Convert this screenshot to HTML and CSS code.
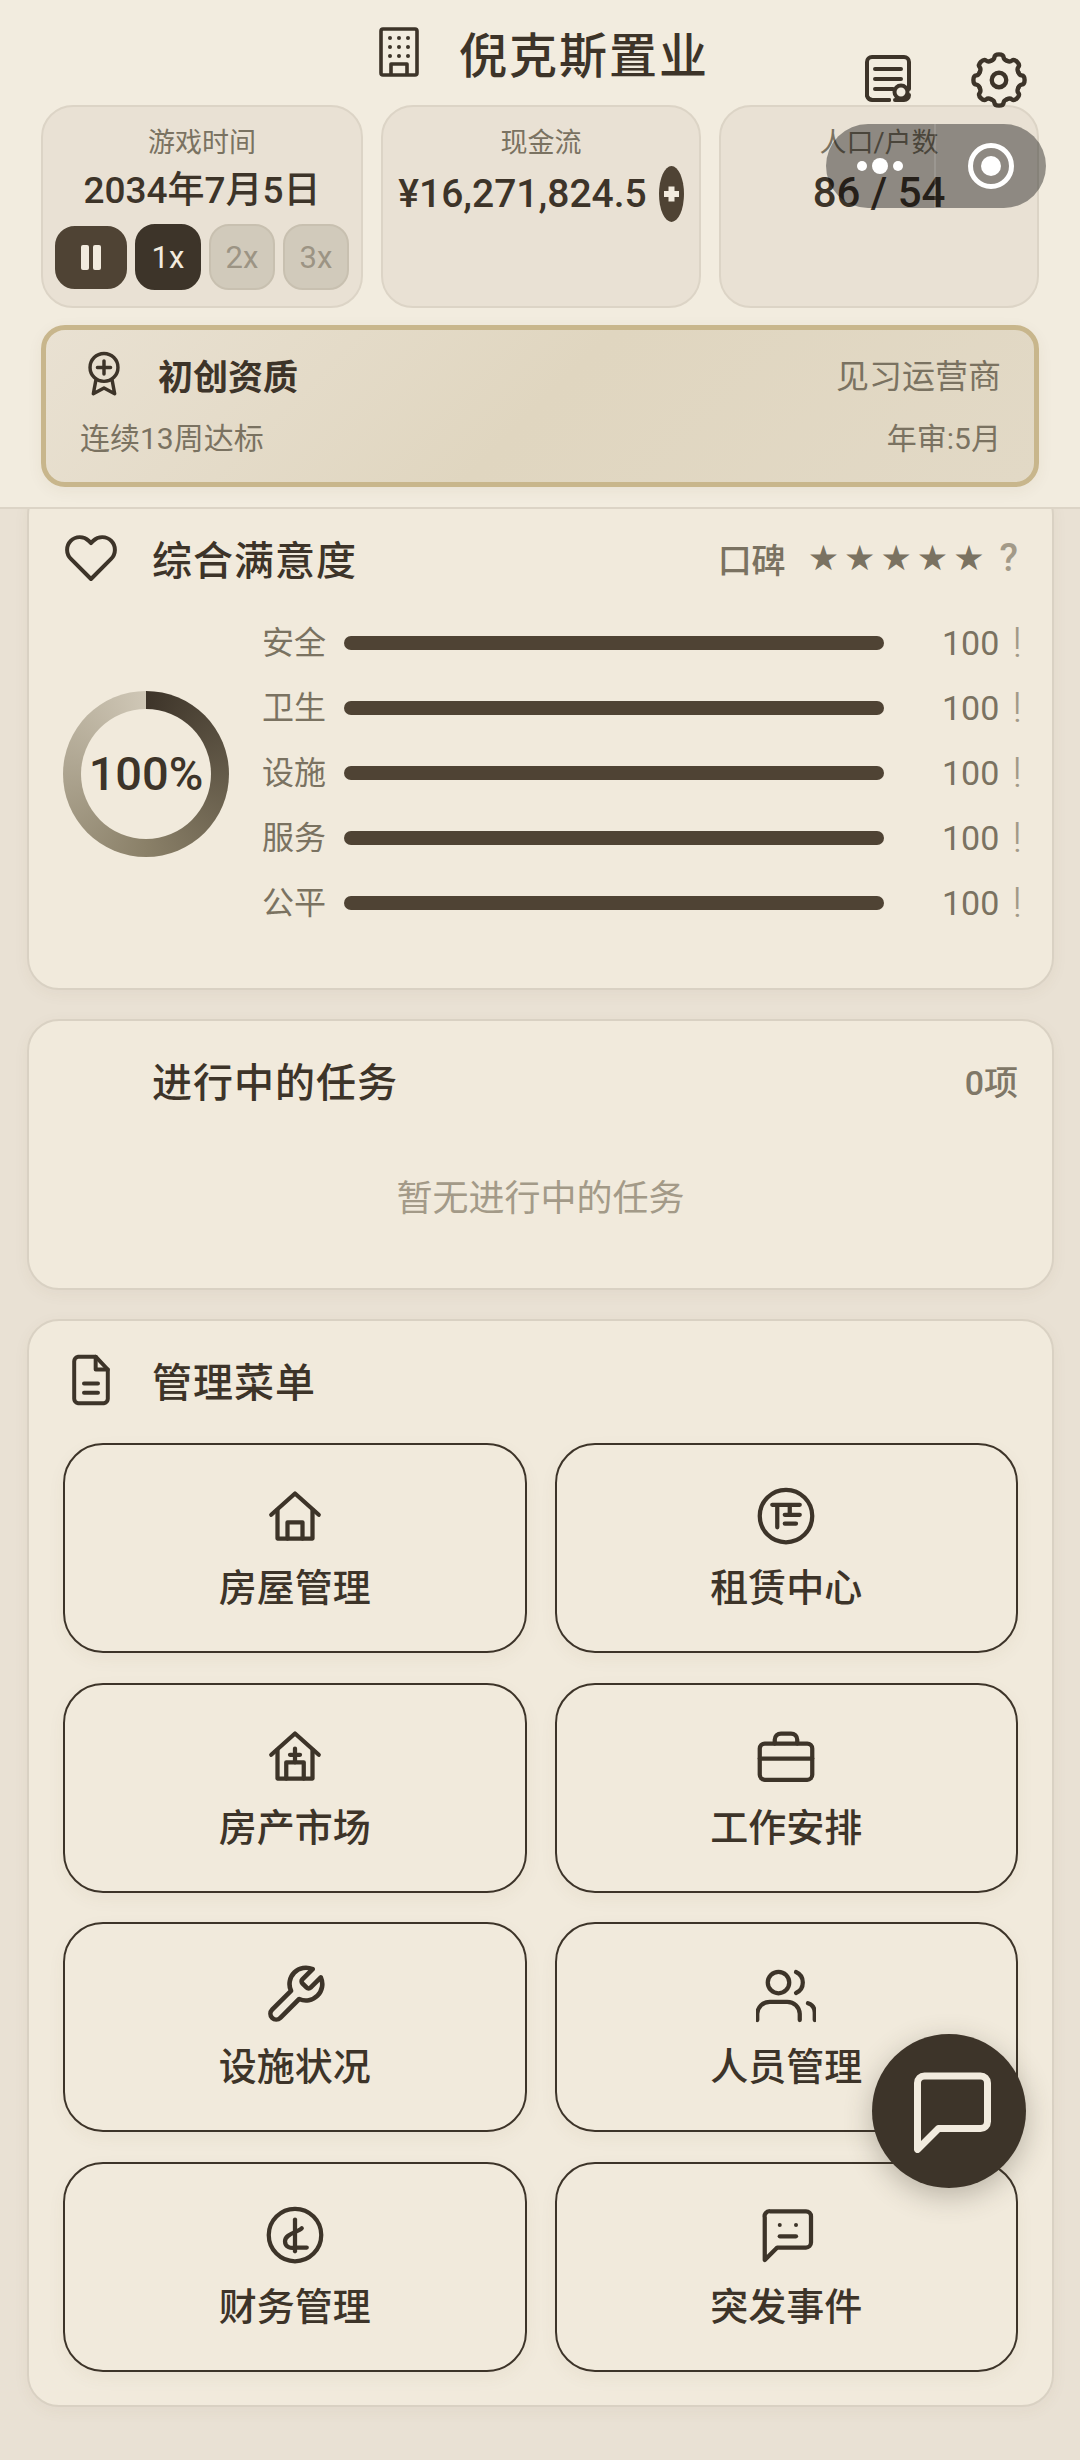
FILE: index.html
```html
<!DOCTYPE html>
<html lang="zh-CN">
<head>
    <meta charset="UTF-8">
    <title>倪克斯置业</title>
    <link rel="stylesheet" href="styles.css">
</head>
<body>
    <header class="top">
        <div class="brand">
            <svg class="brand-icon" viewBox="0 0 40 50"><rect x="2" y="2" width="36" height="46" rx="2"/><path d="M12 47V37H28V47"/><g class="dots"><circle cx="11" cy="11" r="2"/><circle cx="20" cy="11" r="2"/><circle cx="29" cy="11" r="2"/><circle cx="11" cy="20" r="2"/><circle cx="20" cy="20" r="2"/><circle cx="29" cy="20" r="2"/><circle cx="11" cy="29" r="2"/><circle cx="20" cy="29" r="2"/><circle cx="29" cy="29" r="2"/></g></svg>
            <h1>倪克斯置业</h1>
        </div>
        <svg class="top-icon log-icon" viewBox="0 0 46 48"><path d="M24 45H8a6 6 0 0 1-6-4V7a5 5 0 0 1 5-5H39a5 5 0 0 1 5 5V34"/><path d="M24 45H8"/><path d="M10 14H36M10 24H36M10 34H28"/><circle cx="36" cy="37" r="6.5"/><path d="M30 45H39a5 5 0 0 0 5-5"/></svg>
        <svg class="top-icon gear-icon" viewBox="0 0 24 24"><g id="gear"><path d="M8.7 4.05Q10 3.6 10.1 2.6Q10.2 1.4 12 1.4Q13.8 1.4 13.9 2.6Q14 3.6 15.3 4.05"/><path transform="rotate(45 12 12)" d="M8.7 4.05Q10 3.6 10.1 2.6Q10.2 1.4 12 1.4Q13.8 1.4 13.9 2.6Q14 3.6 15.3 4.05"/><path transform="rotate(90 12 12)" d="M8.7 4.05Q10 3.6 10.1 2.6Q10.2 1.4 12 1.4Q13.8 1.4 13.9 2.6Q14 3.6 15.3 4.05"/><path transform="rotate(135 12 12)" d="M8.7 4.05Q10 3.6 10.1 2.6Q10.2 1.4 12 1.4Q13.8 1.4 13.9 2.6Q14 3.6 15.3 4.05"/><path transform="rotate(180 12 12)" d="M8.7 4.05Q10 3.6 10.1 2.6Q10.2 1.4 12 1.4Q13.8 1.4 13.9 2.6Q14 3.6 15.3 4.05"/><path transform="rotate(225 12 12)" d="M8.7 4.05Q10 3.6 10.1 2.6Q10.2 1.4 12 1.4Q13.8 1.4 13.9 2.6Q14 3.6 15.3 4.05"/><path transform="rotate(270 12 12)" d="M8.7 4.05Q10 3.6 10.1 2.6Q10.2 1.4 12 1.4Q13.8 1.4 13.9 2.6Q14 3.6 15.3 4.05"/><path transform="rotate(315 12 12)" d="M8.7 4.05Q10 3.6 10.1 2.6Q10.2 1.4 12 1.4Q13.8 1.4 13.9 2.6Q14 3.6 15.3 4.05"/></g><circle cx="12" cy="12" r="3"/></svg>

        <div class="stats">
            <div class="stat">
                <div class="stat-label">游戏时间</div>
                <div class="stat-value">2034年7月5日</div>
                <div class="speeds">
                    <div class="speed pause"><i></i><i></i></div>
                    <div class="speed active">1x</div>
                    <div class="speed">2x</div>
                    <div class="speed">3x</div>
                </div>
            </div>
            <div class="stat">
                <div class="stat-label">现金流</div>
                <div class="stat-value cash">¥16,271,824.5<span class="plus"></span></div>
            </div>
            <div class="stat">
                <div class="stat-label">人口/户数</div>
                <div class="stat-value people">86 / 54</div>
            </div>
        </div>

        <div class="rank">
            <div class="rank-row">
                <div class="rank-name">
                    <svg class="rank-icon" viewBox="0 0 24 28"><circle cx="12" cy="10" r="8.5"/><path d="M12 6V14M8 10H16"/><path d="M7 18L5.5 26L12 22.5L18.5 26L17 18"/></svg>
                    <strong>初创资质</strong>
                </div>
                <span class="rank-level">见习运营商</span>
            </div>
            <div class="rank-row sub">
                <span>连续13周达标</span>
                <span>年审:5月</span>
            </div>
        </div>
    </header>

    <main class="content">
        <section class="card satisfaction">
            <div class="card-head">
                <svg class="head-icon" viewBox="0 0 24 24"><path d="M12 21L3.4 12.4A5.4 5.4 0 0 1 11 4.6L12 5.6L13 4.6A5.4 5.4 0 0 1 20.6 12.4Z"/></svg>
                <h2>综合满意度</h2>
                <div class="rep">
                    <span class="rep-label">口碑</span>
                    <span class="stars">★★★★★</span>
                    <span class="hint">?</span>
                </div>
            </div>
            <div class="sat-body">
                <div class="ring"><span>100%</span></div>
                <div class="bars">
                    <div class="bar-row"><span class="bar-label">安全</span><div class="bar"></div><span class="bar-num">100</span><span class="bar-mark">!</span></div>
                    <div class="bar-row"><span class="bar-label">卫生</span><div class="bar"></div><span class="bar-num">100</span><span class="bar-mark">!</span></div>
                    <div class="bar-row"><span class="bar-label">设施</span><div class="bar"></div><span class="bar-num">100</span><span class="bar-mark">!</span></div>
                    <div class="bar-row"><span class="bar-label">服务</span><div class="bar"></div><span class="bar-num">100</span><span class="bar-mark">!</span></div>
                    <div class="bar-row"><span class="bar-label">公平</span><div class="bar"></div><span class="bar-num">100</span><span class="bar-mark">!</span></div>
                </div>
            </div>
        </section>

        <section class="card tasks">
            <div class="card-head">
                <span class="head-icon"></span>
                <h2>进行中的任务</h2>
                <span class="task-count">0项</span>
            </div>
            <p class="empty">暂无进行中的任务</p>
        </section>

        <section class="card menu">
            <div class="card-head">
                <svg class="head-icon" viewBox="0 0 24 24"><path d="M14 2H6.5A2 2 0 0 0 4.8 4V20A2 2 0 0 0 6.5 22H17.5A2 2 0 0 0 19.2 20V7.5Z"/><path d="M14 2V7.5H19.2"/><path d="M9 13.5H15M9 17.5H15"/></svg>
                <h2>管理菜单</h2>
            </div>
            <div class="menu-grid">
                <div class="menu-item">
                    <svg class="menu-icon" viewBox="0 0 24 24"><path d="M2.5 11.5L12 3L21.5 11.5"/><path d="M5 9.5V21H19V9.5"/><path d="M9 21V14.5H15V21"/></svg>
                    <span>房屋管理</span>
                </div>
                <div class="menu-item">
                    <svg class="menu-icon" viewBox="0 0 24 24"><circle cx="12" cy="12" r="10.5"/><path d="M6.5 7.5H17.5M8.5 7.5V16.5M13.5 7.5V11.5M11.5 11.5H17.5M11.5 15H16"/></svg>
                    <span>租赁中心</span>
                </div>
                <div class="menu-item">
                    <svg class="menu-icon" viewBox="0 0 24 24"><path d="M2.5 11.5L12 3L21.5 11.5"/><path d="M5 9.5V21H19V9.5"/><path d="M8.5 21V14.5H15.5V21"/><path d="M12 9V14.5M10 11.5H14"/></svg>
                    <span>房产市场</span>
                </div>
                <div class="menu-item">
                    <svg class="menu-icon" viewBox="0 0 24 24"><rect x="1.5" y="7" width="21" height="14.5" rx="2"/><path d="M1.5 13H22.5"/><path d="M7.5 7V5.5A2.5 2.5 0 0 1 10 3H14A2.5 2.5 0 0 1 16.5 5.5V7"/></svg>
                    <span>工作安排</span>
                </div>
                <div class="menu-item">
                    <svg class="menu-icon" viewBox="1 1 22 22"><path d="M14.7 6.3a1 1 0 0 0 0 1.4l1.6 1.6a1 1 0 0 0 1.4 0l3.77-3.77a6 6 0 0 1-7.94 7.94l-6.91 6.91a2.12 2.12 0 0 1-3-3l6.91-6.91a6 6 0 0 1 7.94-7.94l-3.76 3.76z"/></svg>
                    <span>设施状况</span>
                </div>
                <div class="menu-item">
                    <svg class="menu-icon" viewBox="0.5 0 24 24"><circle cx="9.5" cy="7" r="4.3"/><path d="M16.5 2.8A4.6 4.6 0 0 1 16.5 11.2"/><path d="M1 22V19.5A5 5 0 0 1 6 14.7H13A5 5 0 0 1 18 19.5V22"/><path d="M21.3 15.3A4 4 0 0 1 24 19V22"/></svg>
                    <span>人员管理</span>
                </div>
                <div class="menu-item">
                    <svg class="menu-icon" viewBox="0 0 24 24"><circle cx="12" cy="12" r="10.5"/><path d="M12 5.8V18.5"/><path d="M14.7 9.3C13 11 8 11.5 8 14.5C8 17 10.5 17.5 12 17L16.7 17"/></svg>
                    <span>财务管理</span>
                </div>
                <div class="menu-item">
                    <svg class="menu-icon" viewBox="0 0 24 24"><path d="M3.5 22V5A2 2 0 0 1 5.5 2.5H20A2 2 0 0 1 22 4.5V15A2 2 0 0 1 20 17H8.5Z"/><path d="M9.5 12.5H16"/><circle class="eye" cx="9.5" cy="8" r="0.8"/><circle class="eye" cx="16" cy="8" r="0.8"/></svg>
                    <span>突发事件</span>
                </div>
            </div>
        </section>
    </main>

    <div class="capsule">
        <div class="capsule-more"><i></i><i class="big"></i><i></i></div>
        <div class="capsule-close"><i></i></div>
    </div>

    <div class="fab">
        <svg viewBox="0 0 24 24"><path d="M3 23V4A2 2 0 0 1 5 2H21A2 2 0 0 1 23 4V15A2 2 0 0 1 21 17H9Z"/></svg>
    </div>
</body>
</html>
```

FILE: styles.css
```css
* {
    box-sizing: border-box;
}
body {
    margin: 0;
    min-height: 2460px;
    background: #e9e1d4;
    color: #3d3429;
    font-family: Roboto, "Noto Sans CJK SC", sans-serif;
    overflow: hidden;
}
svg {
    fill: none;
    stroke: #3d3429;
    stroke-linecap: round;
    stroke-linejoin: round;
    flex-shrink: 0;
}

/* top area */
.top {
    position: relative;
    z-index: 2;
    height: 509px;
    padding: 21px 41px 0;
    background: #f2ecdf;
    border-bottom: 2px solid #dcd4c6;
}
.brand {
    display: flex;
    justify-content: center;
    align-items: center;
    gap: 40px;
    height: 62px;
    padding-left: 8px;
}
.brand-icon {
    width: 40px;
    height: 50px;
    stroke-width: 3.6;
}
.brand-icon .dots {
    fill: #3d3429;
    stroke: none;
}
h1 {
    margin: 0;
    font-size: 48px;
    font-weight: 500;
    letter-spacing: 2px;
}
.top-icon {
    position: absolute;
}
.log-icon {
    left: 865px;
    top: 55px;
    width: 46px;
    height: 48px;
    stroke-width: 4;
}
.gear-icon {
    left: 970px;
    top: 51px;
    width: 58px;
    height: 58px;
    stroke-width: 1.8;
}
.stats {
    display: grid;
    grid-template-columns: repeat(3, 1fr);
    gap: 18px;
    margin-top: 22px;
}
.stat {
    height: 203px;
    padding: 18px 12px 0;
    background: #e9e1d4;
    border: 2px solid #dcd4c6;
    border-radius: 32px;
    text-align: center;
}
.stat-label {
    font-size: 27px;
    line-height: 36px;
    color: #7a7261;
}
.stat-value {
    margin-top: 7px;
    font-size: 37px;
    line-height: 46px;
    font-weight: 500;
}
.cash {
    display: flex;
    align-items: center;
    justify-content: center;
    gap: 12px;
    margin-top: 5px;
    font-size: 39px;
    white-space: nowrap;
}
.people {
    margin-top: 9px;
    font-size: 42px;
}
.plus {
    position: relative;
    width: 25px;
    height: 56px;
    background: #4f4334;
    border-radius: 50%;
}
.plus::before,
.plus::after {
    content: "";
    position: absolute;
    left: 5px;
    top: 25px;
    width: 15px;
    height: 6px;
    background: #f2ebde;
}
.plus::after {
    transform: rotate(90deg);
}
.speeds {
    display: flex;
    justify-content: center;
    align-items: center;
    gap: 8px;
    margin-top: 10px;
}
.speed {
    width: 66px;
    height: 66px;
    display: flex;
    align-items: center;
    justify-content: center;
    background: #d1cabb;
    border: 2px solid #c8c0b0;
    border-radius: 20px;
    color: #9c9484;
    font-size: 31px;
}
.speed.active {
    background: #3d3429;
    border-color: #3d3429;
    color: #f2ebde;
}
.speed.pause {
    width: 72px;
    height: 63px;
    gap: 4px;
    background: #4f4334;
    border-color: #4f4334;
}
.pause i {
    width: 8px;
    height: 25px;
    background: #f2ebde;
    border-radius: 2px;
}

/* rank */
.rank {
    height: 162px;
    margin-top: 17px;
    padding: 17px 33px 0 34px;
    background: linear-gradient(135deg, #e9e1d2, #e0d6c0 50%, #e2d9c6);
    border: 5px solid #c8b68c;
    border-radius: 24px;
    box-shadow: 0 4px 16px rgba(90, 70, 40, 0.06);
}
.rank-row {
    display: flex;
    justify-content: space-between;
    align-items: center;
    height: 54px;
    font-size: 33px;
    color: #7a7261;
}
.rank-row.sub {
    height: 44px;
    margin-top: 13px;
    font-size: 30px;
}
.rank-name {
    display: flex;
    align-items: center;
    gap: 34px;
    margin-left: 4px;
    color: #3d3429;
    font-size: 35px;
}
.rank-icon {
    width: 40px;
    height: 46px;
    stroke-width: 2.1;
}

/* cards */
.content {
    position: relative;
    display: flex;
    flex-direction: column;
    gap: 29px;
    padding: 0 26px 0 27px;
}
.card {
    padding: 28px 34px 34px;
    background: #f1eadc;
    border: 2px solid #d9d1c3;
    border-radius: 32px;
    box-shadow: 0 4px 16px rgba(90, 70, 40, 0.05);
}
.card-head {
    display: flex;
    align-items: center;
    height: 62px;
}
.head-icon {
    width: 56px;
    height: 56px;
    margin-right: 33px;
    stroke-width: 1.7;
}
h2 {
    margin: 0;
    font-size: 40px;
    font-weight: 500;
    letter-spacing: 1px;
}

.satisfaction {
    height: 507px;
    margin-top: -26px;
    padding-top: 42px;
}
.rep {
    display: flex;
    align-items: center;
    margin-left: auto;
    font-size: 34px;
}
.rep-label {
    font-weight: 500;
    color: #7a7261;
}
.stars {
    margin-left: 22px;
    font-family: "DejaVu Sans", sans-serif;
    font-size: 35px;
    letter-spacing: 5px;
    color: #7a7261;
}
.hint {
    margin-left: 10px;
    font-size: 38px;
    font-weight: 500;
    color: #a39a88;
}
.sat-body {
    display: flex;
    align-items: center;
    margin-top: 21px;
}
.ring {
    width: 166px;
    height: 166px;
    margin-top: 2px;
    display: flex;
    align-items: center;
    justify-content: center;
    background: conic-gradient(#3d3429, #8a8068 50%, #cfc7b6);
    border-radius: 50%;
    flex-shrink: 0;
}
.ring span {
    width: 130px;
    height: 130px;
    display: flex;
    align-items: center;
    justify-content: center;
    background: #f1eadc;
    border-radius: 50%;
    font-size: 47px;
    font-weight: 500;
}
.bars {
    flex: 1;
    margin-left: 33px;
}
.bar-row {
    display: flex;
    align-items: center;
    height: 65px;
    font-size: 32px;
    color: #7a7261;
}
.bar-label {
    width: 82px;
    padding-bottom: 6px;
}
.bar {
    width: 540px;
    height: 14px;
    background: #4f4334;
    border-radius: 7px;
}
.bar-num {
    margin-left: 58px;
    font-size: 34px;
}
.bar-mark {
    margin-left: auto;
    margin-right: -4px;
    font-size: 42px;
    font-weight: 300;
    color: #a39a88;
}

.tasks {
    height: 271px;
}
.task-count {
    margin-left: auto;
    font-size: 34px;
    font-weight: 500;
    color: #7f7767;
}
.empty {
    margin: 58px 0 0;
    text-align: center;
    font-size: 36px;
    color: #a39a88;
}

.menu {
    height: 1088px;
}
.menu-grid {
    display: grid;
    grid-template-columns: 1fr 1fr;
    gap: 29.5px 28px;
    margin-top: 32px;
}
.menu-item {
    height: 210px;
    display: flex;
    flex-direction: column;
    align-items: center;
    padding-top: 41px;
    border: 2px solid #3d3429;
    border-radius: 40px;
    box-shadow: 0 6px 18px rgba(90, 70, 40, 0.05);
    font-size: 38px;
    font-weight: 500;
}
.menu-item span {
    margin-top: 17px;
    line-height: 50px;
}
.menu-icon {
    width: 60px;
    height: 60px;
    stroke-width: 1.7;
}
.menu-icon .eye {
    fill: #3d3429;
    stroke: none;
}

/* things over the page */
.capsule {
    position: absolute;
    z-index: 5;
    left: 826px;
    top: 124px;
    width: 220px;
    height: 84px;
    display: flex;
    background: rgba(0, 0, 0, 0.39);
    border-radius: 42px;
}
.capsule-more {
    width: 110px;
    display: flex;
    align-items: center;
    justify-content: center;
    gap: 5px;
    border-right: 2px solid rgba(255, 255, 255, 0.12);
}
.capsule-more i {
    width: 10px;
    height: 10px;
    background: #fff;
    border-radius: 50%;
}
.capsule-more i.big {
    width: 16px;
    height: 16px;
}
.capsule-close {
    flex: 1;
    display: flex;
    align-items: center;
    justify-content: center;
}
.capsule-close i {
    position: relative;
    width: 46px;
    height: 46px;
    border: 5px solid #fff;
    border-radius: 50%;
}
.capsule-close i::after {
    content: "";
    position: absolute;
    left: 8px;
    top: 8px;
    width: 20px;
    height: 20px;
    background: #fff;
    border-radius: 50%;
}
.fab {
    position: absolute;
    z-index: 4;
    left: 872px;
    top: 2034px;
    width: 154px;
    height: 154px;
    display: flex;
    align-items: center;
    justify-content: center;
    background: #3d3429;
    border-radius: 50%;
    box-shadow: 0 8px 28px rgba(61, 52, 41, 0.3);
}
.fab svg {
    width: 84px;
    height: 84px;
    stroke: #f2ebde;
    stroke-width: 2;
}
```
